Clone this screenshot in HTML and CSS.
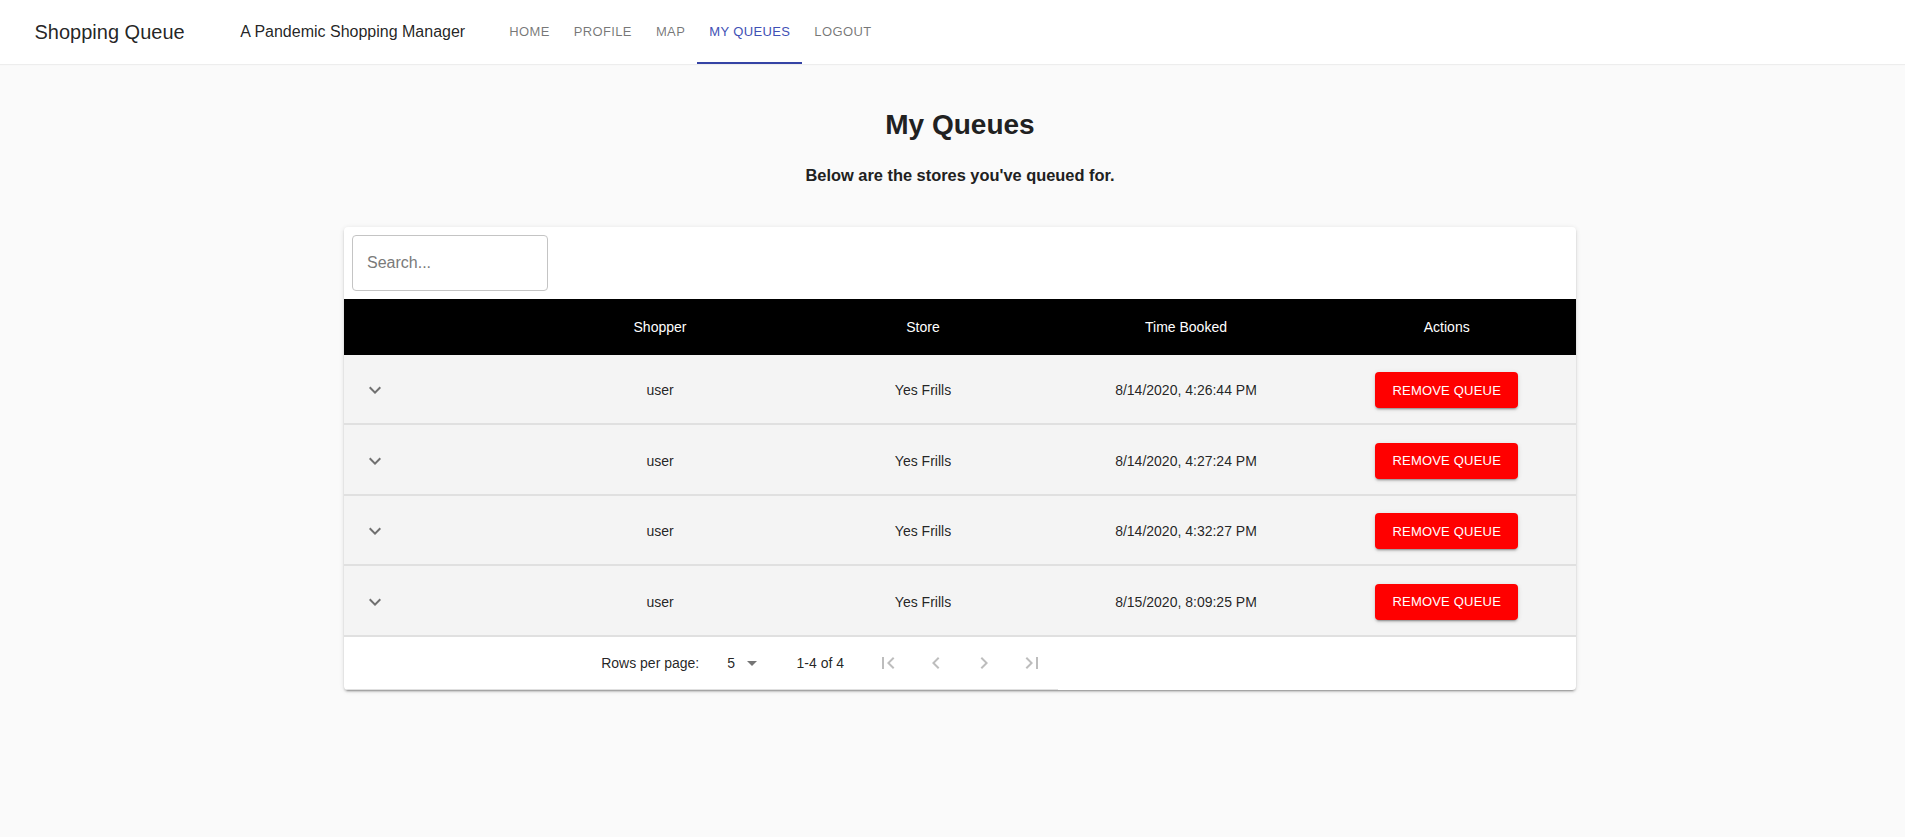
FILE: index.html
```html
<!DOCTYPE html>
<html lang="en">
<head>
<meta charset="utf-8">
<title>My Queues - Shopping Queue</title>
<link rel="stylesheet" href="styles.css">
</head>
<body>
<header class="appbar">
  <div class="toolbar">
    <span class="brand">Shopping Queue</span>
    <span class="tagline">A Pandemic Shopping Manager</span>
    <nav class="tabs">
      <a class="tab">Home</a>
      <a class="tab">Profile</a>
      <a class="tab">Map</a>
      <a class="tab tab-active">My Queues</a>
      <a class="tab">Logout</a>
    </nav>
  </div>
</header>

<main class="page">
  <h1 class="title">My Queues</h1>
  <p class="subtitle">Below are the stores you've queued for.</p>

  <section class="card">
    <div class="card-toolbar">
      <input class="search" type="text" placeholder="Search...">
    </div>

    <div class="table">
      <div class="row head">
        <div class="cell"></div>
        <div class="cell">Shopper</div>
        <div class="cell">Store</div>
        <div class="cell">Time Booked</div>
        <div class="cell">Actions</div>
      </div>

      <div class="row body-row">
        <div class="cell expand"><svg class="icon" viewBox="0 0 24 24"><path d="M16.59 8.59L12 13.17 7.41 8.59 6 10l6 6 6-6z"/></svg></div>
        <div class="cell">user</div>
        <div class="cell">Yes Frills</div>
        <div class="cell">8/14/2020, 4:26:44 PM</div>
        <div class="cell"><button class="btn-remove">Remove Queue</button></div>
      </div>
      <div class="row body-row">
        <div class="cell expand"><svg class="icon" viewBox="0 0 24 24"><path d="M16.59 8.59L12 13.17 7.41 8.59 6 10l6 6 6-6z"/></svg></div>
        <div class="cell">user</div>
        <div class="cell">Yes Frills</div>
        <div class="cell">8/14/2020, 4:27:24 PM</div>
        <div class="cell"><button class="btn-remove">Remove Queue</button></div>
      </div>
      <div class="row body-row">
        <div class="cell expand"><svg class="icon" viewBox="0 0 24 24"><path d="M16.59 8.59L12 13.17 7.41 8.59 6 10l6 6 6-6z"/></svg></div>
        <div class="cell">user</div>
        <div class="cell">Yes Frills</div>
        <div class="cell">8/14/2020, 4:32:27 PM</div>
        <div class="cell"><button class="btn-remove">Remove Queue</button></div>
      </div>
      <div class="row body-row">
        <div class="cell expand"><svg class="icon" viewBox="0 0 24 24"><path d="M16.59 8.59L12 13.17 7.41 8.59 6 10l6 6 6-6z"/></svg></div>
        <div class="cell">user</div>
        <div class="cell">Yes Frills</div>
        <div class="cell">8/15/2020, 8:09:25 PM</div>
        <div class="cell"><button class="btn-remove">Remove Queue</button></div>
      </div>
    </div>

    <div class="pagination">
      <span class="caption">Rows per page:</span>
      <span class="select-value">5</span>
      <svg class="icon select-arrow" viewBox="0 0 24 24"><path d="M7 10l5 5 5-5z"/></svg>
      <span class="caption range">1-4 of 4</span>
      <div class="page-actions">
        <span class="page-btn"><svg class="icon" viewBox="0 0 24 24"><path d="M18.41 16.59L13.82 12l4.59-4.59L17 6l-6 6 6 6zM6 6h2v12H6z"/></svg></span>
        <span class="page-btn"><svg class="icon" viewBox="0 0 24 24"><path d="M15.41 7.41L14 6l-6 6 6 6 1.41-1.41L10.83 12z"/></svg></span>
        <span class="page-btn"><svg class="icon" viewBox="0 0 24 24"><path d="M10 6L8.59 7.41 13.17 12l-4.58 4.59L10 18l6-6z"/></svg></span>
        <span class="page-btn"><svg class="icon" viewBox="0 0 24 24"><path d="M5.59 7.41L10.18 12l-4.59 4.59L7 18l6-6-6-6zM16 6h2v12h-2z"/></svg></span>
      </div>
    </div>
  </section>
</main>
</body>
</html>
```

FILE: styles.css
```css
* { box-sizing: border-box; }

html, body {
  margin: 0;
  padding: 0;
}

body {
  background: #fafafa;
  font-family: "Liberation Sans", Arial, sans-serif;
  color: rgba(0, 0, 0, 0.87);
}

/* ---------- App bar ---------- */
.appbar {
  background: #ffffff;
  box-shadow: 0 1px 1px rgba(0, 0, 0, 0.05);
}

.toolbar {
  height: 64px;
  display: flex;
  align-items: center;
  padding-left: 34.5px;
}

.brand {
  font-size: 20px;
  color: rgba(0, 0, 0, 0.87);
}

.tagline {
  font-size: 16px;
  margin-left: 55.5px;
  color: rgba(0, 0, 0, 0.87);
}

.tabs {
  display: flex;
  align-self: stretch;
  margin-left: 32px;
}

.tab {
  display: flex;
  align-items: center;
  padding: 0 12px;
  font-size: 13px;
  letter-spacing: 0.02857em;
  text-transform: uppercase;
  color: rgba(0, 0, 0, 0.54);
  border-bottom: 2px solid transparent;
  cursor: pointer;
}

.tab-active {
  color: #3f51b5;
  border-bottom-color: #3543a5;
}

/* ---------- Page ---------- */
.page {
  width: 1232px;
  margin-left: 344px;
  padding-bottom: 40px;
}

.title {
  margin: 43.6px 0 0;
  font-size: 28px;
  line-height: 34px;
  font-weight: 700;
  text-align: center;
  color: #212121;
}

.subtitle {
  margin: 23.4px 0 0;
  font-size: 16.4px;
  line-height: 20px;
  font-weight: 700;
  text-align: center;
  color: #212121;
}

/* ---------- Card ---------- */
.card {
  margin-top: 42px;
  background: #ffffff;
  border-radius: 4px;
  box-shadow: 0 3px 1px -2px rgba(0, 0, 0, 0.2),
              0 2px 2px 0 rgba(0, 0, 0, 0.14),
              0 1px 5px 0 rgba(0, 0, 0, 0.12);
  overflow: hidden;
}

.card-toolbar {
  padding: 8px;
}

.search {
  display: block;
  width: 196px;
  height: 56px;
  border: 1px solid #c4c4c4;
  border-radius: 4px;
  padding: 0 14px;
  font-family: inherit;
  font-size: 16px;
  color: rgba(0, 0, 0, 0.87);
  background: #fff;
  outline: none;
}

.search::placeholder {
  color: #7a7a7a;
  opacity: 1;
}

/* ---------- Table ---------- */
.row {
  display: grid;
  grid-template-columns: 184.5px 263px 263px 263px 1fr;
  align-items: center;
}

.cell {
  text-align: center;
  font-size: 14px;
}

.head {
  height: 56px;
  background: #000000;
}

.head .cell {
  color: #ffffff;
}

.body-row {
  height: 70.5px;
  padding-top: 2px;
  background: #f4f4f4;
  border-bottom: 2px solid #e0e0e0;
}

.body-row .cell {
  color: rgba(0, 0, 0, 0.87);
}

.cell.expand {
  text-align: left;
  padding-left: 19px;
  display: flex;
  align-items: center;
}

.icon {
  width: 24px;
  height: 24px;
  display: block;
  fill: rgba(0, 0, 0, 0.54);
}

.btn-remove {
  height: 36px;
  padding: 0 17px;
  border: none;
  border-radius: 4px;
  background: #ff0000;
  color: #ffffff;
  font-family: inherit;
  font-size: 13px;
  letter-spacing: 0.2px;
  text-transform: uppercase;
  box-shadow: 0 3px 1px -2px rgba(0, 0, 0, 0.2),
              0 2px 2px 0 rgba(0, 0, 0, 0.14),
              0 1px 5px 0 rgba(0, 0, 0, 0.12);
  cursor: pointer;
}

/* ---------- Pagination ---------- */
.pagination {
  width: 714px;
  height: 53px;
  display: flex;
  align-items: center;
  justify-content: flex-end;
  padding-right: 2px;
  border-bottom: 1px solid #e0e0e0;
}

.caption {
  font-size: 14px;
  color: rgba(0, 0, 0, 0.87);
}

.select-value {
  margin-left: 28px;
  font-size: 14px;
  color: rgba(0, 0, 0, 0.87);
}

.select-arrow {
  margin-left: 5px;
}

.range {
  margin-left: 32.5px;
}

.page-actions {
  display: flex;
  margin-left: 20px;
}

.page-btn {
  width: 48px;
  height: 48px;
  display: flex;
  align-items: center;
  justify-content: center;
}

.page-btn .icon {
  fill: rgba(0, 0, 0, 0.26);
}
```
